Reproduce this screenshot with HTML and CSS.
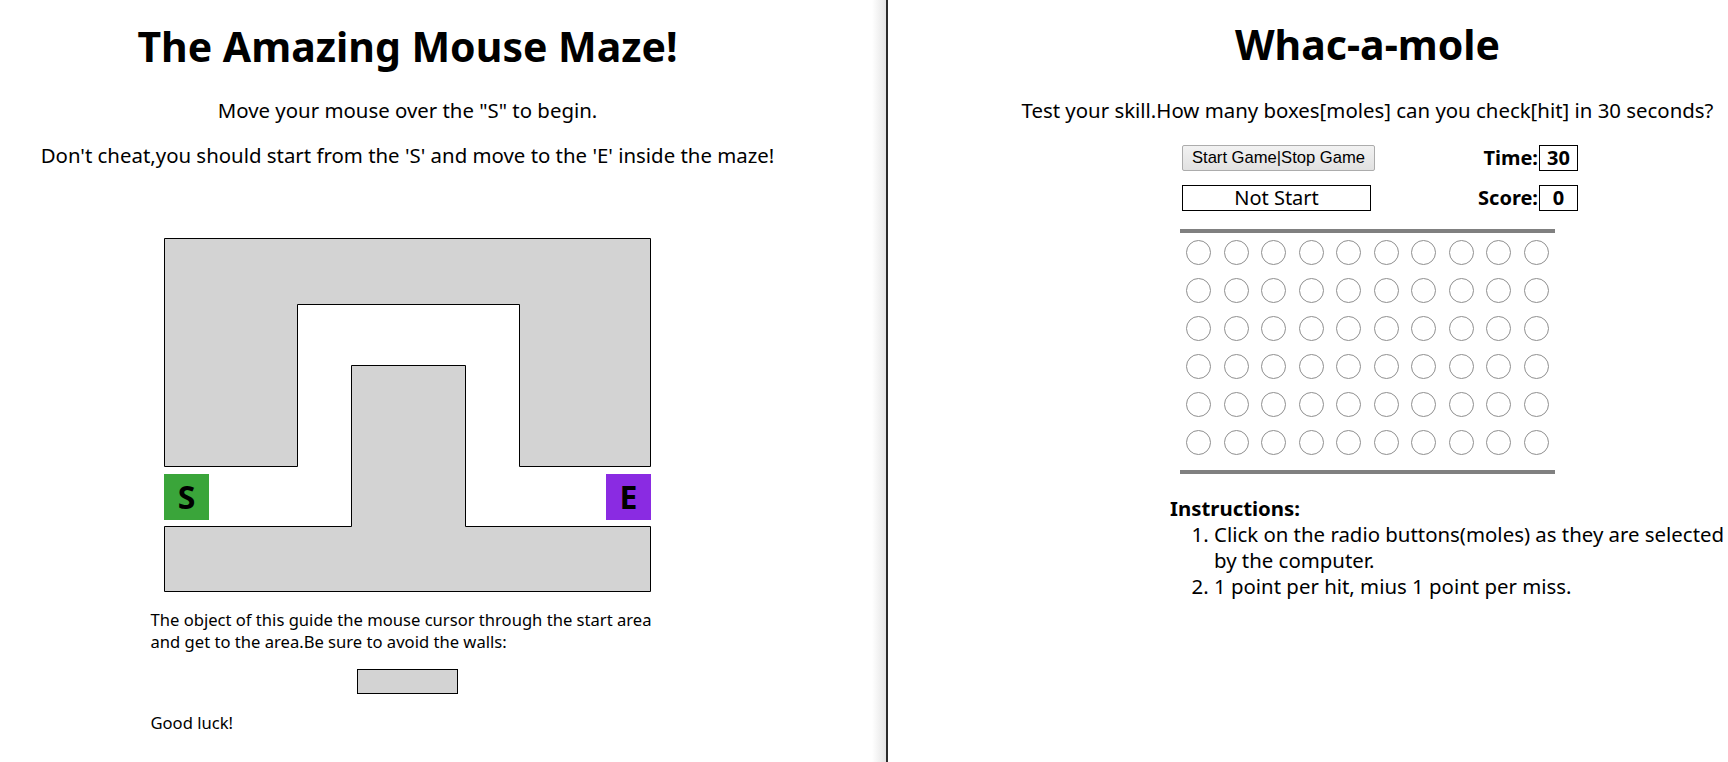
FILE: index.html
```html
<!DOCTYPE html>
<html>
<head>
<meta charset="utf-8">
<title>Games</title>
<link rel="stylesheet" href="styles.css">
</head>
<body>
<div class="page">
  <section class="left">
    <div class="left-inner">
      <h1 class="title">The Amazing Mouse Maze!</h1>
      <p class="lead lead-first">Move your mouse over the "S" to begin.</p>
      <p class="lead lead-second">Don't cheat,you should start from the 'S' and move to the 'E' inside the maze!</p>
      <div class="maze">
        <svg class="maze-walls" width="488" height="355" viewBox="0 0 488 355">
          <path d="M0.5 0.5 H486.5 V228.5 H355.5 V66.5 H133.5 V228.5 H0.5 Z" fill="#d3d3d3" stroke="#000" stroke-width="1"/>
          <path d="M187.5 127.5 H301.5 V288.5 H486.5 V353.5 H0.5 V288.5 H187.5 Z" fill="#d3d3d3" stroke="#000" stroke-width="1"/>
        </svg>
        <div class="cell cell-start">S</div>
        <div class="cell cell-end">E</div>
      </div>
      <div class="guide">
        <p class="guide-text">The object of this guide the mouse cursor through the start area and get to the area.Be sure to avoid the walls:</p>
        <div class="wall-sample"></div>
        <p class="guide-luck">Good luck!</p>
      </div>
    </div>
  </section>
  <div class="divider"></div>
  <section class="right">
    <div class="right-inner">
      <h1 class="title title-right">Whac-a-mole</h1>
      <p class="lead lead-first">Test your skill.How many boxes[moles] can you check[hit] in 30 seconds?</p>
      <div class="controls">
        <button class="game-btn" type="button">Start Game|Stop Game</button>
        <div class="stat"><span class="stat-label">Time:</span><span class="stat-box">30</span></div>
        <div class="status">Not Start</div>
        <div class="stat"><span class="stat-label">Score:</span><span class="stat-box">0</span></div>
      </div>
      <div class="board">
        <div class="holes" id="holes"></div>
      </div>
      <div class="instructions">
        <div class="instr-title">Instructions:</div>
        <ol class="instr-list">
          <li>Click on the radio buttons(moles) as they are selected by the computer.</li>
          <li>1 point per hit, mius 1 point per miss.</li>
        </ol>
      </div>
    </div>
  </section>
</div>
<script src="script.js"></script>
</body>
</html>
```

FILE: script.js
```js
var holes = document.getElementById('holes');
for (var i = 0; i < 60; i++) {
  var c = document.createElement('span');
  c.className = 'hole';
  holes.appendChild(c);
}
```

FILE: styles.css
```css
html, body {
  margin: 0;
  padding: 0;
  background: #fff;
}
body {
  font-family: "Noto Sans", "Open Sans", sans-serif;
  color: #000;
  width: 1728px;
  height: 762px;
  overflow: hidden;
}
.page {
  display: flex;
  height: 762px;
}
.left {
  width: 886px;
  flex: none;
  background: linear-gradient(to right, #fff 0, #fff 872px, #e4e4e4 886px);
}
.left-inner {
  width: 815px;
  display: flex;
  flex-direction: column;
  align-items: center;
}
.divider {
  width: 2px;
  flex: none;
  background: #2b2b2b;
}
.right {
  flex: 1;
  overflow: hidden;
}
.right-inner {
  width: 959px;
}
.title {
  margin: 19px 0 0;
  font-size: 41px;
  line-height: 54px;
  font-weight: 700;
  text-align: center;
}
.title-right {
  margin-top: 17px;
}
.lead {
  margin: 0;
  font-size: 20.4px;
  line-height: 28px;
  text-align: center;
}
.lead-first {
  margin-top: 23px;
}
.right .lead-first {
  margin-top: 25px;
}
.lead-second {
  margin-top: 17px;
}
.maze {
  position: relative;
  width: 488px;
  height: 355px;
  margin-top: 69px;
  margin-left: 1px;
}
.maze-walls {
  display: block;
}
.cell {
  position: absolute;
  top: 236px;
  width: 45px;
  height: 46px;
  font-size: 32px;
  font-weight: 700;
  line-height: 46px;
  text-align: center;
}
.cell-start {
  left: 0;
  background: #3aa53a;
}
.cell-end {
  left: 442px;
  background: #8a2be2;
}
.guide {
  width: 514px;
  margin-top: 16px;
  display: flex;
  flex-direction: column;
  font-size: 16.6px;
  line-height: 22px;
}
.guide-text {
  margin: 0;
}
.wall-sample {
  align-self: center;
  width: 99px;
  height: 23px;
  margin-top: 16px;
  background: #d3d3d3;
  border: 1px solid #000;
}
.guide-luck {
  margin: 18px 0 0;
}
.controls {
  margin: 21px 0 0 294px;
  width: 396px;
  display: grid;
  grid-template-columns: 194px 1fr;
  row-gap: 14px;
}
.game-btn {
  width: 193px;
  height: 26px;
  padding: 0;
  font-family: "Liberation Sans", Arial, sans-serif;
  font-size: 16.6px;
  color: #000;
  background: linear-gradient(#f2f2f2, #e1e1e1);
  border: 1px solid #acacac;
  border-radius: 2px;
}
.status {
  width: 187px;
  height: 24px;
  border: 1px solid #000;
  font-size: 20px;
  line-height: 24px;
  text-align: center;
}
.stat {
  display: flex;
  justify-content: flex-end;
  align-items: center;
  font-size: 20px;
  font-weight: 700;
}
.stat-label {
  line-height: 26px;
}
.stat-box {
  width: 37px;
  height: 24px;
  margin-left: 1px;
  border: 1px solid #000;
  line-height: 24px;
  text-align: center;
}
.board {
  margin: 18px 0 0 292px;
  width: 375px;
  border-top: 4px solid #808080;
  border-bottom: 4px solid #808080;
  padding-bottom: 9px;
}
.holes {
  display: grid;
  grid-template-columns: repeat(10, 37.5px);
  grid-auto-rows: 38px;
  align-items: center;
  justify-items: center;
}
.hole {
  width: 23px;
  height: 23px;
  border: 1px solid #8f8f8f;
  border-radius: 50%;
  background: #fff;
}
.instructions {
  margin: 21px 0 0 282px;
  width: 564px;
  font-size: 20.4px;
  line-height: 26px;
}
.instr-title {
  font-weight: 700;
}
.instr-list {
  margin: 0;
  padding-left: 44px;
}
```
